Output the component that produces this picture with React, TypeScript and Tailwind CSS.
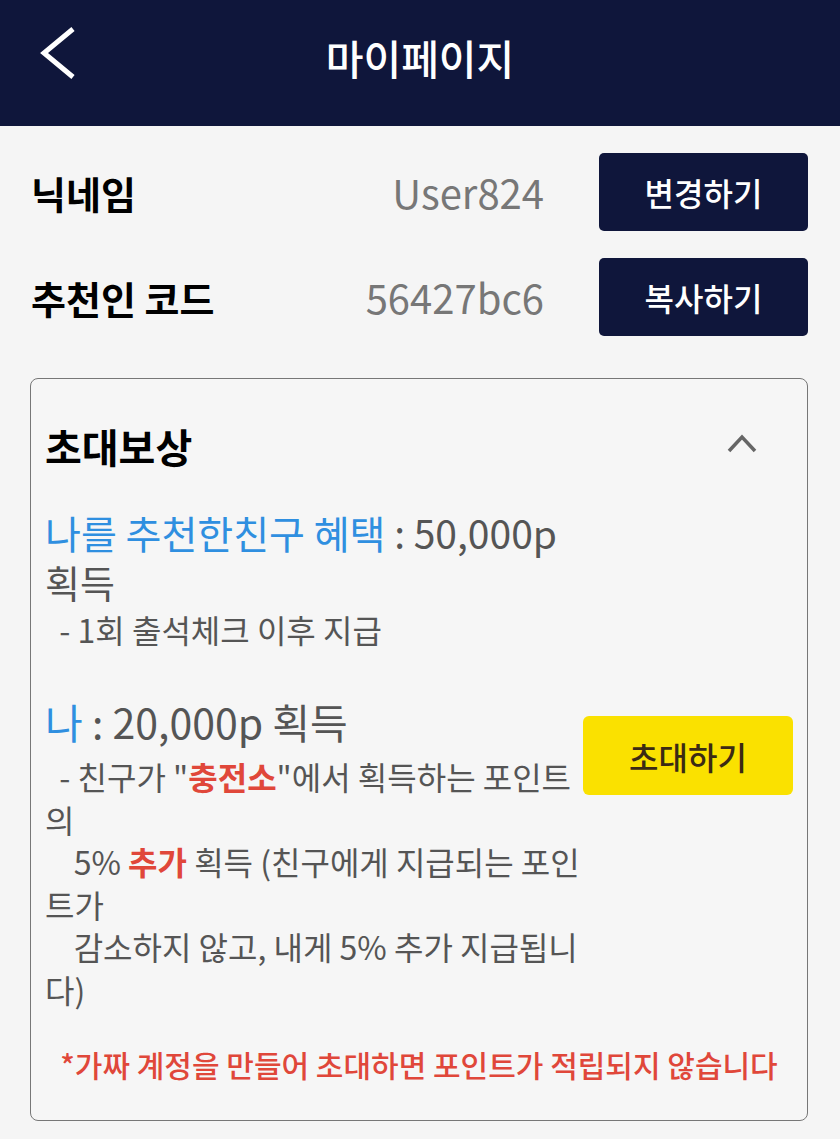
import React from "react";

const font = { fontFamily: '"Noto Sans CJK KR", "Noto Sans", sans-serif' };

export default function App() {
    return (
        <div style={font} className="min-h-[1139px] w-[840px] bg-[#f5f5f5]">
            {/* header */}
            <div className="flex h-[126px] items-start bg-[#0f163b]">
                <div className="w-[100px] shrink-0">
                    <svg width="36" height="54" viewBox="0 0 36 54" className="ml-[40px] mt-[26px]">
                        <polyline points="33,3 4,27 33,51" fill="none" stroke="#ffffff" strokeWidth="5" />
                    </svg>
                </div>
                <h1 className="mt-[28px] flex-1 text-center text-[41px] font-medium leading-[58px] text-white">마이페이지</h1>
                <div className="w-[100px] shrink-0" />
            </div>

            <div className="pl-[30px] pr-[32px]">
                {/* nickname */}
                <div className="mt-[27px] flex h-[78px] items-center">
                    <span className="flex-1 pl-[1px] text-[38px] font-bold text-black">닉네임</span>
                    <span className="text-[40px] text-[#777777]">User824</span>
                    <button className="ml-[55px] h-[78px] w-[209px] rounded-[5px] bg-[#0f163b] text-[32px] font-medium text-white">
                        변경하기
                    </button>
                </div>
                {/* referral code */}
                <div className="mt-[27px] flex h-[78px] items-center">
                    <span className="flex-1 pl-[1px] text-[38px] font-bold text-black">추천인 코드</span>
                    <span className="text-[40px] text-[#777777]">56427bc6</span>
                    <button className="ml-[55px] h-[78px] w-[209px] rounded-[5px] bg-[#0f163b] text-[32px] font-medium text-white">
                        복사하기
                    </button>
                </div>

                {/* invite reward card */}
                <div className="mt-[42px] rounded-[8px] border-[1.5px] border-[#777777] bg-[#f6f6f6] pb-[34px] pl-[14px] pr-[14px] pt-[41px]">
                    <div className="flex items-center">
                        <h2 className="flex-1 text-[40px] font-bold leading-[52px] text-black">초대보상</h2>
                        <svg width="30" height="20" viewBox="0 0 30 20" className="mb-[6px] mr-[36px]">
                            <polyline points="2,18 15,4 28,18" fill="none" stroke="#666666" strokeWidth="3.5" />
                        </svg>
                    </div>

                    <div className="mt-[35px] text-[#555555]">
                        <div className="whitespace-pre text-[39px] leading-[50px]">
                            <span className="text-[#2f8fe0]">나를 추천한친구 혜택</span> : 50,000p
                        </div>
                        <div className="text-[38px] leading-[50px]">획득</div>
                        <div className="whitespace-pre text-[32px] leading-[44px]">  - 1회 출석체크 이후 지급</div>
                    </div>

                    <div className="mt-[45px] flex items-start">
                        <div className="min-w-0 flex-1 text-[#555555]">
                            <div className="whitespace-pre text-[41px] leading-[50px]">
                                <span className="text-[#2f8fe0]">나</span> : 20,000p 획득
                            </div>
                            <div className="mt-[9px] whitespace-pre text-[32px] leading-[42.5px]">
                                {"  - 친구가 \""}
                                <span className="font-bold text-[#e0473a]">충전소</span>
                                {"\"에서 획득하는 포인트"}
                            </div>
                            <div className="text-[32px] leading-[42.5px]">의</div>
                            <div className="whitespace-pre text-[32px] leading-[42.5px]">
                                {"    5% "}
                                <span className="font-bold text-[#e0473a]">추가</span>
                                {" 획득 (친구에게 지급되는 포인"}
                            </div>
                            <div className="text-[32px] leading-[42.5px]">트가</div>
                            <div className="whitespace-pre text-[32px] leading-[42.5px]">    감소하지 않고, 내게 5% 추가 지급됩니</div>
                            <div className="text-[32px] leading-[42.5px]">다)</div>
                        </div>
                        <button className="mt-[20px] h-[79px] w-[210px] shrink-0 rounded-[6px] bg-[#fae100] text-[32px] font-medium text-[#3b2a14]">
                            초대하기
                        </button>
                    </div>

                    <p className="mt-[32px] text-center text-[30px] font-medium leading-[44px] text-[#e0473a]">
                        *가짜 계정을 만들어 초대하면 포인트가 적립되지 않습니다
                    </p>
                </div>
            </div>
        </div>
    );
}
